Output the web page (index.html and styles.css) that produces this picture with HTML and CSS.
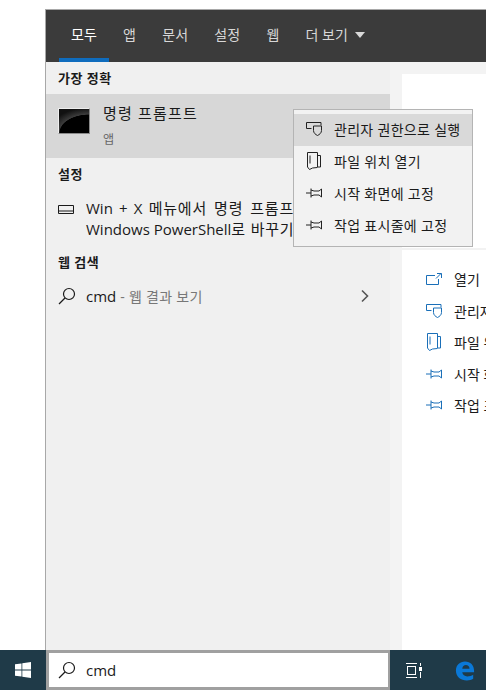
FILE: index.html

```html
<!DOCTYPE html>
<html lang="ko">
<head>
  <meta charset="UTF-8">
  <title>cmd 검색</title>
  <link rel="stylesheet" href="styles.css">
</head>
<body>
  <svg class="defs" width="0" height="0">
    <symbol id="shield" viewBox="0 0 16 14"><path d="M5.500 6.500H.5V.5H15v3M7.500 4h8v4.500c0 2.500-2 4-4 5-2-1-4-2.500-4-5z" fill="none" stroke="currentColor"/></symbol>
    <symbol id="folder" viewBox="0 0 14 18"><path d="M.5.500h10v14.500h3V3.500h-3M.5.500v14.500l2 2.500 3-1.500 5-.5M3 3.500v8" fill="none" stroke="currentColor"/></symbol>
    <symbol id="pin" viewBox="0 0 16 10"><path d="M0 5h5M5 .5v9M5 2l3 1h5l2.500-2v8L13 7H8l-3 1" fill="none" stroke="currentColor"/></symbol>
    <symbol id="search" viewBox="0 0 18 18"><circle cx="11" cy="7" r="5.500" fill="none" stroke="currentColor" stroke-width="1.200"/><path d="M7 11l-6 6" fill="none" stroke="currentColor" stroke-width="1.300"/></symbol>
  </svg>

  <div class="top">
    <div class="panel">
      <div class="tabs">
        <div class="tab active">모두</div>
        <div class="tab">앱</div>
        <div class="tab">문서</div>
        <div class="tab">설정</div>
        <div class="tab">웹</div>
        <div class="tab">더 보기<span class="caret"></span></div>
      </div>
      <div class="cols">
        <div class="results">
          <div class="head first">가장 정확</div>
          <div class="best">
            <div class="cmd-icon"></div>
            <div>
              <div class="best-name">명령 프롬프트</div>
              <div class="best-type">앱</div>
            </div>
          </div>
          <div class="head">설정</div>
          <div class="setting">
            <svg class="kbd" width="16" height="9" viewBox="0 0 16 9"><path d="M.5.5h15v8H.5zM1 6h14" fill="none" stroke="currentColor"/></svg>
            <div><span class="line-one">Win + X <span class="ko">메뉴에서 명령 프롬프트를</span></span><br>Windows PowerShell<span class="ko">로 바꾸기</span></div>
          </div>
          <div class="head">웹 검색</div>
          <div class="web">
            <svg class="ic-search" width="18" height="18"><use href="#search"/></svg>
            <span class="web-text">cmd <span class="dim">- 웹 결과 보기</span></span>
            <svg class="chev" width="10" height="14" viewBox="0 0 10 14"><path d="M2 1.500L7.500 7 2 12.500" fill="none" stroke="currentColor" stroke-width="1.600"/></svg>
          </div>
        </div>
        <div class="detail">
          <div class="preview"></div>
          <div class="actions">
            <div class="action"><svg width="16" height="12" viewBox="0 0 16 12"><path d="M9 2.500H.5v9h12V6M10 5.500l5-5M11 .5h4.500V5" fill="none" stroke="currentColor"/></svg>열기</div>
            <div class="action"><svg width="16" height="14"><use href="#shield"/></svg>관리자 권한으로 실행</div>
            <div class="action"><svg width="14" height="18"><use href="#folder"/></svg>파일 위치 열기</div>
            <div class="action"><svg width="16" height="10"><use href="#pin"/></svg>시작 화면에 고정</div>
            <div class="action"><svg width="16" height="10"><use href="#pin"/></svg>작업 표시줄에 고정</div>
          </div>
        </div>
      </div>
    </div>
  </div>

  <div class="menu">
    <div class="menu-item on"><svg width="16" height="14"><use href="#shield"/></svg>관리자 권한으로 실행</div>
    <div class="menu-item"><svg width="14" height="18"><use href="#folder"/></svg>파일 위치 열기</div>
    <div class="menu-item"><svg width="16" height="10"><use href="#pin"/></svg>시작 화면에 고정</div>
    <div class="menu-item"><svg width="16" height="10"><use href="#pin"/></svg>작업 표시줄에 고정</div>
  </div>

  <div class="taskbar">
    <div class="start">
      <svg width="16" height="16" viewBox="0 0 16 16"><path d="M0 2.300l6.500-.9v6.200H0zM7.300 1.300L16 0v7.600H7.300zM0 8.400h6.500v6.200L0 13.700zM7.300 8.400H16V16l-8.700-1.300z" fill="#fff"/></svg>
    </div>
    <div class="searchbox">
      <svg class="ic-search" width="18" height="18"><use href="#search"/></svg>
      <span>cmd</span>
    </div>
    <div class="tray-btn">
      <svg width="16" height="15" viewBox="0 0 16 15"><path d="M0 .5h11M0 14.500h11M1.500 3.500h8M1.500 11.500h8M1.500 3v9M9.500 3v9M14.500 0v3M14.500 9v6" fill="none" stroke="#fff"/><rect x="13" y="4" width="3" height="4" fill="#fff"/></svg>
    </div>
    <div class="tray-btn edge">
      <svg width="20" height="21" viewBox="0 0 22 22"><path d="M1 11C1 5 5.500 1 11 1c6 0 10 4 10 10.500v1.500H8c.3 3 2.700 4.500 5.500 4.500 2.500 0 4.700-.7 6.500-1.800v4.500c-1.800 1-4.200 1.800-7 1.800C6.500 22 1 18 1 11zm7-2h8c-.2-2.500-1.700-4-4-4S8.300 6.500 8 9z" fill="#0a78d7"/></svg>
    </div>
  </div>
</body>
</html>
```

FILE: styles.css

```css
* { box-sizing: border-box; }
html, body { margin: 0; height: 100%; }
body { width: 486px; height: 690px; overflow: hidden; background: #fff; font-family: "Open Sans", "Noto Sans CJK KR", sans-serif; font-size: 15px; color: #1a1a1a; display: flex; flex-direction: column; position: relative; }
.defs { position: absolute; }

.top { flex: 1; min-height: 0; padding: 9px 0 0 45px; }
.panel { height: 100%; display: flex; flex-direction: column; border-left: 1px solid #a8a8a8; border-top: 1px solid #a8a8a8; }

.tabs { height: 52px; flex: none; background: #3b3b3b; display: flex; color: #d8d8d8; font-size: 14px; padding-left: 13px; }
.tab { padding: 14px 12px 0; position: relative; margin-right: 2.300px; }
.tab.active { color: #fff; }
.tab.active::after { content: ""; position: absolute; left: 0; right: 0; bottom: 0; height: 4px; background: #0f6cbd; }
.caret { display: inline-block; border: 5px solid transparent; border-top: 6px solid #d8d8d8; border-bottom: 0; margin-left: 7px; vertical-align: 2px; }

.cols { flex: 1; min-height: 0; display: flex; background: #f3f3f3; }
.results { width: 344px; flex: none; background: #f0f0f0; }
.head { font-weight: 700; font-size: 13px; letter-spacing: .5px; padding: 0 12px; height: 32px; line-height: 32px; }
.best { height: 64px; background: #d7d7d7; display: flex; padding: 9px 12px 0; gap: 13px; }
.cmd-icon { width: 32px; height: 26px; margin-top: 5px; background: radial-gradient(ellipse 100% 78% at 100% 100%, #000 97%, #3c3c3c 100%, #111 135%); border: 1px solid #8a8a8a; border-top-color: #eee; border-left-color: #eee; }
.best-name { font-size: 15px; line-height: 20px; letter-spacing: 1.200px; }
.best-type { font-size: 12px; color: #666; margin-top: 7px; }
.setting { display: flex; padding: 8px 12px 0; gap: 12px; font-size: 15px; line-height: 21px; height: 56px; white-space: nowrap; }
.line-one { word-spacing: 2.300px; }
.ko { letter-spacing: .8px; }
.kbd { margin-top: 7px; flex: none; }
.web { display: flex; align-items: center; padding: 0 20px 0 12px; height: 36px; gap: 10px; }
.web-text { flex: 1; }
.dim { color: #777; font-size: 14px; letter-spacing: .3px; }
.chev { color: #555; }
.ic-search { flex: none; color: #1a1a1a; }

.detail { flex: 1; margin: 12px 0 0 12px; background: #fff; }
.preview { height: 176px; border-bottom: 2px solid #f2f2f2; }
.actions { padding-top: 14px; }
.action { height: 31.500px; display: flex; align-items: center; gap: 12px; padding: 0 0 1px 24px; font-size: 14px; color: #1a1a1a; white-space: nowrap; overflow: hidden; }
.action svg { color: #1a6fb8; width: 16px; flex: none; }

.menu { position: absolute; left: 293px; top: 109px; width: 180px; padding: 4px 0; background: #f2f2f2; border: 1px solid #b4b4b4; font-size: 14px; letter-spacing: .3px; }
.menu-item { height: 32px; display: flex; align-items: center; gap: 12px; padding: 0 0 2px 12px; white-space: nowrap; }
.menu-item svg { width: 16px; flex: none; color: #222; }
.menu-item.on { background: #d9d9d9; }

.taskbar { height: 40px; flex: none; background: #1f3a48; display: flex; }
.start { width: 46px; display: flex; align-items: center; justify-content: center; }
.searchbox { width: 344px; background: #fff; border: 3px solid #a0a0a0; border-right-width: 2px; display: flex; align-items: center; gap: 10px; padding-left: 9px; font-size: 15px; }
.tray-btn { width: 48px; display: flex; align-items: center; justify-content: center; }
.tray-btn.edge { padding-left: 6px; }
```
